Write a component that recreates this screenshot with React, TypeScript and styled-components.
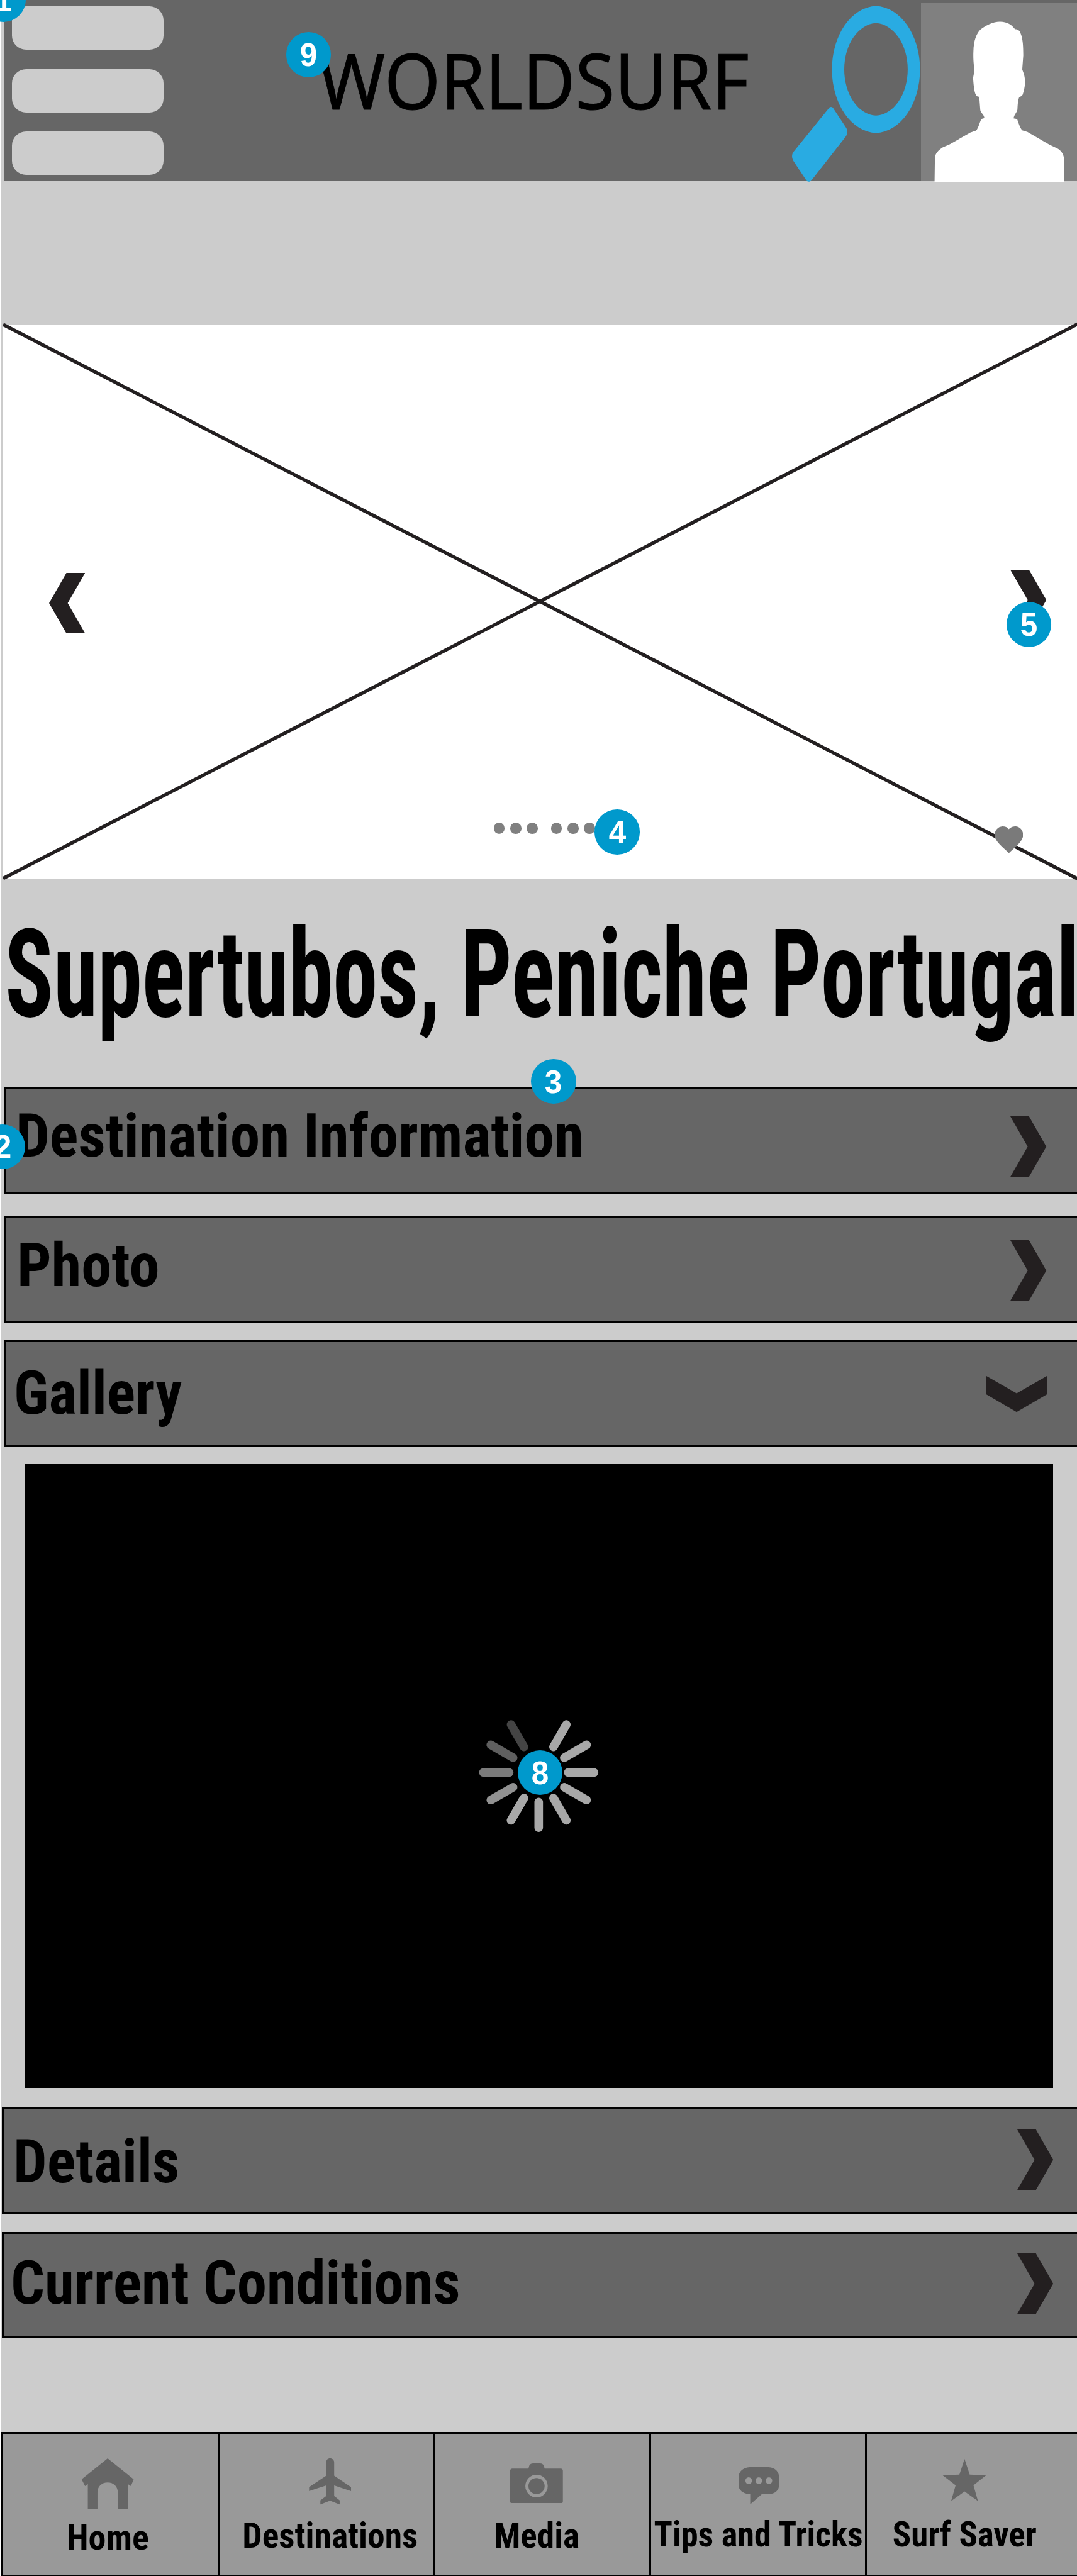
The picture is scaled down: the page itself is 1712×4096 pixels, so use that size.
import React from 'react';
import styled, { createGlobalStyle, css } from 'styled-components';

/* The artboard is 21.33rem wide: 1rem is 100 artboard units. */
const GlobalStyle = createGlobalStyle`
  html { font-size: 80.27px; }
  body { margin: 0; overflow: hidden; background: #fff; }
  *, *::before, *::after { box-sizing: border-box; }
  svg { display: block; }
`;

const condensed = css`
  font-family: 'Roboto Condensed', Roboto, 'Liberation Sans', sans-serif;
  font-weight: 700;
  line-height: 1;
  white-space: nowrap;
  color: #000;
`;

const Page = styled.div`
  width: 100vw;
  height: 100vh;
  padding-left: 0.03rem;
  background: #fff;
  overflow: hidden;
`;

const Sheet = styled.div`
  position: relative;
  display: flex;
  flex-direction: column;
  height: 100%;
  background: #ccc;
`;

/* ---------- annotation pins ---------- */

const PinCircle = styled.span<{ $x: number; $y: number }>`
  position: absolute;
  z-index: 2;
  left: ${(p) => p.$x}rem;
  top: ${(p) => p.$y}rem;
  width: 0.887rem;
  height: 0.887rem;
  margin: -0.4435rem 0 0 -0.4435rem;
  display: flex;
  align-items: center;
  justify-content: center;
  border-radius: 50%;
  background: #0099cc;
`;

const PinDigit = styled.span`
  color: #fff;
  font: 700 0.648rem/1 'Liberation Sans', Arial, sans-serif;
  transform: scaleX(0.95);
`;

function Pin({ x, y, children }: { x: number; y: number; children: React.ReactNode }) {
  return (
    <PinCircle $x={x} $y={y}>
      <PinDigit>{children}</PinDigit>
    </PinCircle>
  );
}

/* ---------- header ---------- */

const Header = styled.header`
  flex: none;
  display: flex;
  align-items: flex-start;
  height: 3.583rem;
  margin-left: 0.045rem;
  background: #666;
`;

const MenuButton = styled.div`
  display: flex;
  flex-direction: column;
  gap: 0.378rem;
  width: 3.008rem;
  margin: 0.13rem 0 0 0.157rem;
`;

const MenuBar = styled.span`
  height: 0.86rem;
  border-radius: 0.28rem;
  background: #ccc;
`;

const Brand = styled.h1`
  width: 8.5rem;
  margin: 0.834rem 0 0 3.07rem;
  font: 400 1.515rem/1 'Noto Sans', 'Open Sans', sans-serif;
  color: #000;
  -webkit-text-stroke: 0.012rem #000;
  white-space: nowrap;
  transform: scaleX(0.939);
  transform-origin: left;
`;

const SearchIcon = styled.svg`
  flex: none;
  width: 2.565rem;
  height: 3.49rem;
  margin: 0.112rem 0 0 auto;
  overflow: visible;
`;

const Avatar = styled.div`
  flex: none;
  width: 3.088rem;
  height: 3.537rem;
  margin-top: 0.046rem;
  background: #808080;
`;

const AvatarImage = styled.svg`
  width: 100%;
  height: 100%;
  overflow: visible;
`;

/* ---------- carousel ---------- */

const Carousel = styled.section`
  position: relative;
  flex: none;
  height: 10.972rem;
  margin: 2.844rem 0 0 0.037rem;
  background: #fff;
`;

const Placeholder = styled.svg`
  width: 100%;
  height: 100%;
  overflow: visible;
`;

const CarouselArrow = styled.svg<{ $left: number; $top: number }>`
  position: absolute;
  left: ${(p) => p.$left}rem;
  top: ${(p) => p.$top}rem;
  width: 0.713rem;
  height: 1.196rem;
`;

const Dots = styled.div`
  position: absolute;
  left: 9.708rem;
  top: 9.873rem;
  display: flex;
  gap: 0.26rem;
`;

const DotGroup = styled.div`
  display: flex;
  gap: 0.108rem;
`;

const Dot = styled.span`
  width: 0.22rem;
  height: 0.22rem;
  border-radius: 50%;
  background: #808080;
`;

const Heart = styled.svg`
  position: absolute;
  left: 19.627rem;
  top: 9.943rem;
  width: 0.566rem;
  height: 0.53rem;
`;

const Title = styled.h2`
  ${condensed}
  flex: none;
  margin: 0.69rem 0 0 0.072rem;
  font-size: 2.433rem;
  transform: scaleX(0.7306);
  transform-origin: left;
`;

/* ---------- accordion ---------- */

const Accordion = styled.div`
  display: flex;
  flex-direction: column;
  margin-top: 1.021rem;
`;

const Row = styled.div<{ $gap: number; $indent: number }>`
  position: relative;
  display: flex;
  justify-content: space-between;
  align-items: flex-start;
  height: 2.117rem;
  margin: ${(p) => p.$gap}rem 0 0 ${(p) => p.$indent}rem;
  border: 0.038rem solid #000;
  border-right: 0;
  background: #666;
`;

const RowLabel = styled.span<{ $left: number; $top: number; $squeeze: number }>`
  ${condensed}
  margin: ${(p) => p.$top}rem 0 0 ${(p) => p.$left}rem;
  font-size: 1.206rem;
  transform: scaleX(${(p) => p.$squeeze});
  transform-origin: left;
`;

const RowArrow = styled.svg<{ $down?: boolean; $top: number; $right: number }>`
  flex: none;
  width: ${(p) => (p.$down ? 1.197 : 0.713)}rem;
  height: ${(p) => (p.$down ? 0.713 : 1.2)}rem;
  margin: ${(p) => p.$top}rem ${(p) => p.$right}rem 0 0;
`;

const MediaPanel = styled.div`
  display: flex;
  justify-content: center;
  align-items: center;
  height: 12.36rem;
  margin: 0.336rem 0.47rem 0 0.45rem;
  padding-bottom: 0.134rem;
  background: #000;
`;

const SpinnerBox = styled.div`
  position: relative;
  width: 2.4rem;
  height: 2.4rem;
`;

const SpinnerArt = styled.svg`
  width: 100%;
  height: 100%;
`;

/* ---------- bottom navigation ---------- */

const BottomNav = styled.nav`
  flex: none;
  display: grid;
  grid-template-columns: repeat(4, 4.275rem) 1fr;
  height: 2.85rem;
  margin-top: auto;
  border-top: 0.04rem solid #000;
  border-bottom: 0.03rem solid #000;
  background: #999;
`;

const NavCell = styled.div`
  display: flex;
  justify-content: center;
  min-width: 0;
  border-left: 0.038rem solid #000;

  &:last-child {
    width: 4.275rem;
  }
`;

const NavStack = styled.div<{ $shift: number }>`
  flex: none;
  display: flex;
  flex-direction: column;
  align-items: center;
  transform: translateX(${(p) => p.$shift}rem);
`;

const NavIconSlot = styled.div<{ $top: number; $lift: number }>`
  height: ${(p) => 1.7 - p.$lift}rem;
  padding-top: ${(p) => p.$top}rem;
`;

const NavIcon = styled.svg<{ $w: number; $h: number }>`
  width: ${(p) => p.$w}rem;
  height: ${(p) => p.$h}rem;
  fill: #666;
`;

const NavLabel = styled.span<{ $squeeze: number }>`
  ${condensed}
  font-size: 0.703rem;
  transform: scaleX(${(p) => p.$squeeze});
`;

/* ---------- data ---------- */

const CHEVRON_RIGHT = 'M0 0H37L71.3 60L37 120H0L34.4 60Z';
const CHEVRON_LEFT = 'M71.3 0H34.3L0 60L34.3 120H71.3L36.9 60Z';
const CHEVRON_DOWN = 'M0 0L60 34.4L120 0V36.5L60 71.3L0 36.5Z';

interface RowProps {
  label: string;
  gap: number;
  indent: number;
  left: number;
  top: number;
  squeeze: number;
  arrowTop: number;
  arrowRight: number;
  open?: boolean;
  children?: React.ReactNode;
}

function AccordionRow({ label, gap, indent, left, top, squeeze, arrowTop, arrowRight, open, children }: RowProps) {
  return (
    <Row $gap={gap} $indent={indent}>
      <RowLabel $left={left} $top={top} $squeeze={squeeze}>{label}</RowLabel>
      <RowArrow
        $down={open}
        $top={arrowTop}
        $right={arrowRight}
        viewBox={open ? '0 0 120 71.3' : '0 0 71.3 120'}
        preserveAspectRatio="none"
      >
        <path d={open ? CHEVRON_DOWN : CHEVRON_RIGHT} fill="#231f20" />
      </RowArrow>
      {children}
    </Row>
  );
}

const SPOKES: [number, string][] = [
  [-60, '#a8a8a8'],
  [-30, '#a8a8a8'],
  [0, '#a8a8a8'],
  [30, '#a8a8a8'],
  [60, '#a8a8a8'],
  [90, '#a8a8a8'],
  [120, '#a8a8a8'],
  [150, '#919191'],
  [180, '#7b7b7b'],
  [210, '#5f5f5f'],
  [240, '#444'],
];

const NAV = [
  {
    label: 'Home', shift: -0.053, squeeze: 0.992, lift: 0, top: 0.482, w: 1.031, h: 1.01,
    box: '237 267 151 303',
    art: <path d="M312.500 267L388 391L380 431L371 419V570H342V470C342 432 329 410 312.500 410C296 410 283 432 283 470V570H255V419L247 431L237 391Z" />,
  },
  {
    label: 'Destinations', shift: 0.077, squeeze: 0.985, lift: 0.03, top: 0.485, w: 0.833, h: 0.914,
    box: '896 268 122 274',
    art: <path d="M957 268C964 268 969 278 969 292V371L1018 439V462L969 429V491L985 517V542L957 519L929 542V517L946 491V429L896 462V439L946 371V292C946 278 950 268 957 268Z" />,
  },
  {
    label: 'Media', shift: -0.112, squeeze: 0.979, lift: 0.03, top: 0.579, w: 1.043, h: 0.793,
    box: '1480 296 153 238',
    art: (
      <>
        <path d="M1486 327H1533L1535 312C1536 302 1540 296 1547 296H1566C1573 296 1577 302 1578 312L1580 327H1627C1631 327 1633 333 1633 339V522C1633 529 1631 534 1627 534H1486C1482 534 1480 529 1480 522V339C1480 333 1482 327 1486 327Z" />
        <ellipse cx="1556.500" cy="430.500" rx="32.500" ry="67.500" fill="#999" />
        <ellipse cx="1556.500" cy="430.500" rx="23.500" ry="48" />
      </>
    ),
  },
  {
    label: 'Tips and Tricks', shift: 0.012, squeeze: 0.962, lift: 0.06, top: 0.659, w: 0.803, h: 0.736,
    box: '580 320 118 221',
    art: (
      <>
        <path d="M612 320H668C688 322 698 350 698 380V425C698 455 688 478 668 480H648L614 541V480H612C592 478 580 455 580 425V380C580 350 592 322 612 320Z" />
        <ellipse cx="609.500" cy="400" rx="9.500" ry="20" fill="#999" />
        <ellipse cx="639" cy="400" rx="9.500" ry="20" fill="#999" />
        <ellipse cx="668.500" cy="400" rx="9.500" ry="20" fill="#999" />
      </>
    ),
  },
  {
    label: 'Surf Saver', shift: -0.183, squeeze: 0.97, lift: 0.06, top: 0.492, w: 0.864, h: 0.833,
    box: '1177 270 127 250',
    art: <path d="M1241 270L1256 363L1304 366L1267 426L1280 520L1241 463L1202 520L1215 426L1177 366L1226 363Z" />,
  },
];

export default function App() {
  return (
    <Page>
      <GlobalStyle />
      <Sheet>
        <Header>
          <MenuButton>
            <MenuBar />
            <MenuBar />
            <MenuBar />
          </MenuButton>
          <Brand>WORLDSURF</Brand>
          <SearchIcon viewBox="1567.5 11.2 256.5 349" preserveAspectRatio="none">
            <path
              fillRule="evenodd"
              fill="#29abe2"
              d="M1735 11.800A89.800 125.900 0 0 1 1735 263.500A89.800 125.900 0 0 1 1735 11.800ZM1735 45.900A65 91.600 0 0 0 1735 229A65 91.600 0 0 0 1735 45.900Z"
            />
            <path
              fill="#29abe2"
              d="M1641.500 214.500C1643.500 211 1648.500 211 1650.500 214.500L1676.400 253.800C1679 259 1679 266 1674.400 271.500L1607 357.500C1604.500 360.500 1599.500 360.500 1597.200 357.500L1571 318C1568 312 1568 306 1571.600 301Z"
            />
          </SearchIcon>
          <Avatar>
            <AvatarImage viewBox="1114.5 11 453.5 840" preserveAspectRatio="none">
              <path
                fill="#fff"
                d="M1344 101C1365 101 1380 117 1388 137C1396 137 1401 142 1404 155C1411 180 1412 220 1412 260L1409 325C1413 345 1417 355 1417 385C1417 410 1413 430 1410 445C1407 452 1403 454 1400 457C1396 475 1396 490 1395 515C1393 530 1385 540 1384 556L1394 559C1398 575 1402 600 1409 612L1424 620L1488 680L1512 698C1522 707 1529 725 1530 740V855H1154L1155 738C1157 720 1165 705 1178 692L1198 678L1258 623L1275 613C1282 600 1285 575 1290 559L1299 555C1298 540 1290 532 1287 518L1284 455L1277 452C1270 440 1268 410 1266 365L1270 332C1268 300 1266 280 1267 240C1268 190 1275 160 1287 139C1300 120 1325 101 1344 101Z"
              />
            </AvatarImage>
          </Avatar>
        </Header>
        <Pin x={0.04} y={-0.006}>1</Pin>
        <Pin x={6.085} y={1.084}>9</Pin>

        <Carousel>
          <Placeholder viewBox="0 0 2126.3 1097.2" preserveAspectRatio="none">
            <path d="M0 0L2129 1098.500M0 1097.200L2129 -1.500" fill="none" stroke="#231f20" strokeWidth="6.800" />
          </Placeholder>
          <CarouselArrow $left={0.9} $top={4.923} viewBox="0 0 71.3 120" preserveAspectRatio="none">
            <path d={CHEVRON_LEFT} fill="#231f20" />
          </CarouselArrow>
          <CarouselArrow $left={19.943} $top={4.855} viewBox="0 0 71.3 120" preserveAspectRatio="none">
            <path d={CHEVRON_RIGHT} fill="#231f20" />
          </CarouselArrow>
          <Dots>
            <DotGroup>
              <Dot />
              <Dot />
              <Dot />
            </DotGroup>
            <DotGroup>
              <Dot />
              <Dot />
              <Dot />
            </DotGroup>
          </Dots>
          <Heart viewBox="1360 216 72 148" preserveAspectRatio="none">
            <path
              fill="#7a7a7a"
              d="M1396 232C1401 218 1408 216 1413 216C1425 217 1432 240 1432 265C1431 300 1412 330 1396 364C1380 330 1361 300 1360 265C1360 240 1368 217 1380 216C1387 216 1392 220 1396 232Z"
            />
          </Heart>
          <Pin x={12.155} y={10.055}>4</Pin>
          <Pin x={20.31} y={5.945}>5</Pin>
        </Carousel>

        <Title>Supertubos, Peniche Portugal</Title>

        <Accordion>
          <AccordionRow label="Destination Information" gap={0} indent={0.053} left={0.19} top={0.316} squeeze={0.984} arrowTop={0.531} arrowRight={0.604}>
            <Pin x={-0.068} y={1.135}>2</Pin>
            <Pin x={10.842} y={-0.155}>3</Pin>
          </AccordionRow>
          <AccordionRow label="Photo" gap={0.43} indent={0.053} left={0.22} top={0.341} squeeze={0.997} arrowTop={0.441} arrowRight={0.604} />
          <AccordionRow label="Gallery" gap={0.342} indent={0.053} left={0.156} top={0.405} squeeze={0.978} arrowTop={0.675} arrowRight={0.6} open />
          <MediaPanel>
            <SpinnerBox>
              <SpinnerArt viewBox="-120 -120 240 240">
                {SPOKES.map(([angle, color]) => (
                  <line
                    key={angle}
                    x1="58.500"
                    x2="109.500"
                    y1="0"
                    y2="0"
                    stroke={color}
                    strokeWidth="17"
                    strokeLinecap="round"
                    transform={`rotate(${angle})`}
                  />
                ))}
              </SpinnerArt>
              <Pin x={1.225} y={1.2}>8</Pin>
            </SpinnerBox>
          </MediaPanel>
          <AccordionRow label="Details" gap={0.382} indent={0.002} left={0.19} top={0.444} squeeze={0.982} arrowTop={0.406} arrowRight={0.47} />
          <AccordionRow label="Current Conditions" gap={0.348} indent={0.002} left={0.138} top={0.376} squeeze={0.98} arrowTop={0.398} arrowRight={0.47} />
        </Accordion>

        <BottomNav>
          {NAV.map((item) => (
            <NavCell key={item.label}>
              <NavStack $shift={item.shift}>
                <NavIconSlot $top={item.top} $lift={item.lift}>
                  <NavIcon $w={item.w} $h={item.h} viewBox={item.box} preserveAspectRatio="none">
                    {item.art}
                  </NavIcon>
                </NavIconSlot>
                <NavLabel $squeeze={item.squeeze}>{item.label}</NavLabel>
              </NavStack>
            </NavCell>
          ))}
        </BottomNav>
      </Sheet>
    </Page>
  );
}
